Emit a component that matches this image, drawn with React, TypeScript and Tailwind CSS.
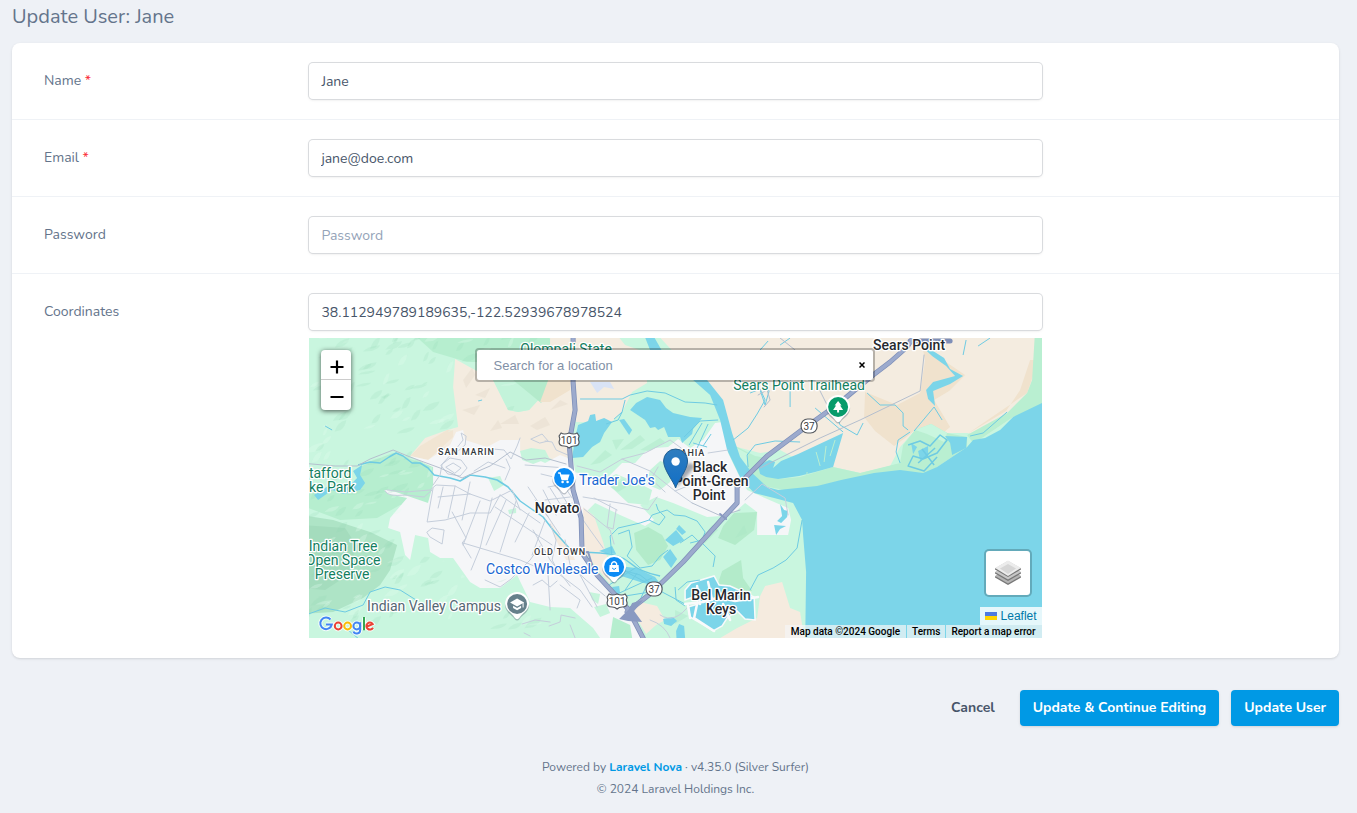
import React, { useState } from "react";

const halo = { paintOrder: "stroke" as const, strokeLinejoin: "round" as const };

const inputClass =
  "block h-9 w-full rounded bg-white px-3 text-sm text-[#475569] placeholder-[#94a3b8] shadow-sm ring-1 ring-[#d9dbde] outline-none focus:ring-2 focus:ring-sky-400";

/* Deterministic hillside facets scattered across the western ridges. */
function hillFacets() {
  let seed = 41;
  const next = () => {
    seed = (seed * 16807) % 2147483647;
    return seed / 2147483647;
  };
  return Array.from({ length: 300 }, (_, i) => {
    const x = 305 + next() * 260;
    const y = 335 + next() * 300;
    const w = 5 + next() * 13;
    const h = 3 + next() * 9;
    return (
      <path
        key={i}
        d={`M${x} ${y} q${w * 0.3} ${-h * 0.9} ${w} ${-h} q${-w * 0.1} ${h * 0.6} ${-w * 0.5} ${h * 0.9} z`}
        fill={i % 3 === 0 ? "#e2fcee" : "#8fd5b0"}
        opacity={i % 3 === 0 ? 0.3 : 0.17}
      />
    );
  });
}

function PoiPin({ x, y, color, children }: { x: number; y: number; color: string; children: React.ReactNode }) {
  return (
    <g transform={`translate(${x} ${y})`}>
      <path d="M-12 1 A12 12 0 1 1 12 1 C11 8 5 10 2.5 14 Q0 17 -2.5 14 C-5 10 -11 8 -12 1Z" fill="#475569" opacity=".35" transform="translate(0 1)" />
      <path d="M-12 0 A12 12 0 1 1 12 0 C11 7 5 9 2.5 13.5 Q0 17 -2.5 13.5 C-5 9 -11 7 -12 0Z" fill="#fff" />
      <circle r="10" fill={color} />
      {children}
    </g>
  );
}

function Shield37({ x, y }: { x: number; y: number }) {
  return (
    <g transform={`translate(${x} ${y})`}>
      <rect x="-8" y="-7" width="16" height="14" rx="6.5" fill="#fff" stroke="#54595f" strokeWidth="1.2" />
      <text y="3.6" textAnchor="middle" fontSize="10" fill="#3c4043">37</text>
    </g>
  );
}

function Shield101({ x, y }: { x: number; y: number }) {
  return (
    <g transform={`translate(${x} ${y})`}>
      <path d="M-8 -7 Q-5 -5 0 -7 Q5 -5 8 -7 L10 -4 Q8.500 -1 10 2 Q10 6 5 6 Q2 6 0 8 Q-2 6 -5 6 Q-10 6 -10 2 Q-8.500 -1 -10 -4Z" fill="#fff" stroke="#54595f" strokeWidth="1.2" />
      <text y="4" textAnchor="middle" fontSize="10" fill="#3c4043">101</text>
    </g>
  );
}

function Terrain() {
  return (
    <g>
      <rect x="300" y="330" width="750" height="320" fill="#c9f6df" />
      {/* wooded ridges */}
      <g fill="#b6eecf">
        <path d="M409 330H550V362L467 362 433 352Z" />
        <path d="M300 515L333 520 370 532 397 545 390 570 380 585 363 598 333 612 300 614Z" fill="#aee4c6" />
        <path d="M360 467L372 461 393 453 433 467 433 485 427 505 400 505 377 518 340 520 300 505V490L360 490Z" />
        <path d="M300 525L345 528 356 545 348 575 325 590 300 588Z" fill="#a4dcbd" />
      </g>
      {/* dry grassland */}
      <g fill="#f4ece0">
        <path d="M455 359L493 380 508 410 518 412 529 410 540 398 550 386V330H573V430L566 465 530 450 433 467 410 456 425 438 447 430 458 427 453 387Z" />
        <path d="M573 330H613L625 345 645 352 647 383 632 392 622 412 610 423 576 422Z" />
        <path d="M653 330H1050V398L1013 417 985 436 967 433 947 433 933 422 915 430 900 447 890 466 860 473 833 467 817 470 780 450 760 453 733 446 720 400 690 370Z" />
      </g>
      <path d="M493 380L508 410 518 412 529 410 540 398 550 384V360H480Z" fill="#c3f3da" />
      <path d="M513 380L541 403 550 386V370Z" fill="#b3eacb" />
      <g fill="#f0e2cd">
        <path d="M550 375H571L570 390 550 402 540 402Z" />
        <path d="M410 456L420 446 447 430 453 430 453 437 441 448 428 460Z" opacity=".7" />
        <path d="M923 350L943 360 965 375 949 391 934 400 950 427 944 432 931 424 915 430 905 438 894 446 875 431 864 417 865 392 897 405 920 393 925 360Z" />
        <path d="M1027 393L1033 376 1035 360 1030 360 1020 390 1006 411 967 434Z" />
      </g>
      {/* built-up areas */}
      <g fill="#f5f6f8">
        <path d="M410 456L433 467 433 485 428 503 390 490 384 490 388 494 407 498 390 518 388 528 400 532 405 555 410 560 415 535 428 538 430 552 440 558 453 558 470 582 480 588 500 588 517 575 530 602 550 607 570 608 593 628 600 638V650H648L628 606 596 571 582 550 583 512 573 460 560 455 545 463 520 452 520 440 500 440 487 447 465 440 463 430 456 432 450 445 428 460Z" />
        <path d="M574 472L588 475 603 482 622 463 635 463 645 452 655 448 668 447 678 439 690 448 703 440 715 423 722 422 728 453 740 478 747 490 774 502 788 508 791 520 788 535 757 535 757 512 745 503 735 512 721 516 707 517 690 510 673 503 656 497 640 505 654 520 645 526 620 515 595 503 583 515 577 490Z" />
      </g>
      <g fill="#c6f4dc">
        <path d="M520 451L531 448 545 450 549 458 533 464 522 460Z" />
        <path d="M604 480L616 474 628 479 636 482 652 490 648 505 628 503 612 488Z" />
        <path d="M488 478L500 476 504 485 494 491Z" />
        <path d="M508 510L516 508 516 513 509 514Z" />
        <path d="M650 470L660 461 673 465 670 482 660 490 646 484Z" />
        <path d="M589 592L600 594 598 604 592 600Z" />
        <path d="M594 607L606 604 610 613 600 617Z" />
        <path d="M613 617L630 625 634 650H608Z" fill="#b6eecf" />
      </g>
      <g fill="#f5ebdf">
        <path d="M583 507L594 516 603 542 607 557 610 584 600 572 583 550Z" />
        <path d="M630 606L640 602 657 606 665 620 656 625 646 634 640 624Z" />
        <path d="M700 650L737 628 757 618 760 596 765 586 782 582 790 608 800 612 806 650Z" />
        <path d="M550 520L555 530 570 550 575 560 566 560 556 540Z" />
      </g>
      {/* marsh and open space */}
      <path d="M733 445L755 456 767 458 765 472 778 479 800 477 833 467 860 473 900 463 903 445 915 430 931 424 947 433 967 437 967 447 937 467 923 476 900 473 841 484 790 491 753 484Z" fill="#b9efd1" />
      <path d="M733 446L748 454 747 470 740 474Z" fill="#c9f6df" />
      <path d="M967 435L1007 413 1027 393 1032 380 1035 330H1050V405L1013 417 985 436 973 443Z" fill="#b9efd1" />
      <path d="M915 430L931 424 947 433 944 442 927 434Z" fill="#c9f6df" />
      <g fill="#b3ebca">
        <path d="M634 533L648 527 662 535 668 546 660 560 648 565 636 550Z" />
        <path d="M723 526L734 513 757 512 754 530 735 545 718 538Z" />
        <path d="M722 571L741 560 743 578 752 591 728 590 718 583Z" />
      </g>
      <path d="M590 382H610L614 389 604 387 597 393Z" fill="#d9e3f5" />
    </g>
  );
}

function Water() {
  return (
    <g fill="#7cd5e9">
      {/* bay */}
      <path d="M740 463L752 475 767 487 778 490 817 486 841 480 874 473 900 470 923 473 937 467 967 447 973 440 985 438 1000 430 1013 417 1050 399V650H805L806 572 803 535 802 520 793 503 774 498 754 493 742 480Z" />
      {/* river */}
      <path d="M642 330H650L662 351 687 367 707 380 723 400 732 433 740 457 752 473 767 487 758 492 748 487 740 477 727 450 720 420 710 395 693 380 670 364 650 350Z" />
      <path d="M630 410L636 403 647 397 660 400 666 408 673 413 690 417 702 418 693 429 692 434 682 443 680 437 668 437 664 427 658 430 655 427 650 428 645 420 636 414Z" />
      <path d="M578 425L588 421 590 415 595 414 596 421 604 418 612 422 604 433 600 442 592 447 583 457 572 458 575 438Z" />
      <path d="M619 420L624 419 632 430 629 435 625 429Z" />
      <path d="M760 474L758 466 769 460 775 462 773 468 781 461 798 454 843 433 833 467 815 472 799 476 778 479 766 477Z" />
      <path d="M362 465L360 475 365 483 360 490 344 494 332 490 318 500 314 495 328 486 348 487 357 478 353 471Z" />
      <path d="M665 540L676 530 684 540 673 546Z M676 529L679 525 686 532 682 535Z M663 557L670 549 677 559 671 568Z" />
      <path d="M945 436L967 437 966 448 952 455 950 443Z M918 451L928 446 928 456 920 460Z M911 443L917 447 913 454Z" />
      <path d="M780 504L784 510 788 511 787 517 781 523 777 521 782 516Z" />
      <path d="M774 525L786 526 780 529 776 535Z" />
      <path d="M685 600V590L691 583 714 576 719 585 730 586 754 597 755 620 745 619 737 611 727 618 722 626 713 631 702 624 690 617 688 607 698 604 696 596Z" stroke="#f8fafb" strokeWidth="1.500" />
      <path d="M663 619L673 617 677 621 671 626 664 624Z M676 631L679 624 684 626 686 650H677Z M618 566L636 568 655 577 663 588 640 582 618 575Z M599 551L612 546 616 554 605 553Z M612 587L619 586 620 593 614 594Z" />
      <path d="M917 342L933 351 944 358 950 369 963 376 950 384 933 391 935 406 928 399 926 390 933 382 955 376 946 366 932 356Z" />
    </g>
  );
}

function Streams() {
  return (
    <g fill="none" stroke="#6ecbe3" strokeWidth="1" strokeLinejoin="round">
      <path strokeWidth="1.500" d="M358 465L370 462 380 463 389 457 396 453 403 456 412 463 420 463 428 468 434 475 450 478 460 481 470 475 485 477 497 480 508 487 520 501 530 508 543 517 553 530 570 549 582 552 600 553" />
      <path d="M600 553Q620 554 630 563T660 576" strokeWidth="1.500" />
      <path d="M300 617L325 608 345 612 363 605 370 592 385 587 400 590 416 600M348 630L360 640M325 426L332 430M478 401L482 400" />
      <path d="M580 399H622L630 395 647 391 665 393 685 402 705 403 717 405M622 412L618 420 606 424M684 437L700 421 718 420M689 445L702 423M697 448L708 424M703 446L711 434M693 443L707 447M625 400L622 412 614 419" />
      <path d="M612 559L610 536 618 528 640 523 649 520 659 525 665 517 658 510 656 504M618 534L629 530 632 547 627 556 640 568 652 566 660 556 668 550M649 520L652 515 667 510 674 515 685 516 697 521 705 532 702 540 690 543M680 543L692 535 698 541" />
      <path d="M611 567L640 575 662 592 685 604M609 585L635 568M615 595L652 578M625 590L637 573M640 600L648 582M619 568L645 582M625 596L650 592" />
      <path d="M700 541L715 556 713 567M802 520L797 548 786 560 773 568 758 575 750 590M678 590L687 582 700 580M675 587L676 600 685 606" />
      <path d="M733 440L748 428 757 414 765 400 760 389 750 393M758 384L765 405 769 391 764 384M748 467L747 455 755 445 775 441 800 442M790 390V407M803 380L811 368 814 351M760 350L768 341M780 345L790 338" />
      <path d="M867 393L880 405 895 405 903 413 903 426 908 430M914 431L934 407 942 420M835 413L840 425 857 435 863 423M815 408L843 432M900 463L896 452 898 440 910 432M970 436L983 433 1007 412M963 355L966 340M978 346L990 338" />
      <path d="M807 472L806 484M816 452L820 466M826 446L824 462M835 440L830 456" stroke="#b9efd1" />
      <path strokeWidth="1.500" d="M908 445L920 441 930 446 940 435 947 440 937 453 923 459 913 456 908 466 924 471 937 457M918 463L935 448M922 449L934 465" />
    </g>
  );
}

function Roads() {
  return (
    <g fill="none" strokeLinejoin="round" strokeLinecap="round">
      <g stroke="#c5cedb" strokeWidth="1">
        <path d="M441 465L450 458 461 460 467 468 460 476 448 474ZM446 467L453 463 461 468 455 473Z" />
        <path d="M433 485L440 475 442 464 455 450 463 440 461 433 466 436 465 445 458 451M493 449L504 450 511 459 517 446 520 438M505 480L510 468 506 459M474 471L488 462 505 468" />
        <path d="M387 490L405 492 430 490 436 485 455 486 470 494 490 501 512 490 520 510M385 491Q387 497 405 495L424 497 432 490M433 488L427 522 445 520 470 513 490 513 500 495M438 497L470 494M443 487L438 508M455 486L448 518M470 482L462 520M452 512L466 538 462 543 471 558M480 501L463 545M492 498L480 548 471 570M500 495L540 523M495 507L552 545M506 500L486 545M516 501L500 552M529 513L515 542M545 520L532 555M463 543L520 560 548 572" />
        <path d="M427 532L432 528 444 530 442 544 430 537ZM485 580L500 587 511 579 530 560 540 546M533 530L550 560 570 586M550 524L556 540 552 560 560 575 580 590 592 607M565 540L570 565 586 580 605 596M580 575L597 607M560 585L580 600 577 608M548 575L550 610M533 585L542 580 550 587 557 581" />
        <path d="M545 500L570 497M542 507L572 503M535 500L548 517M543 490L556 515M550 488L565 512M557 487L572 511M564 486L572 498M548 487L570 483M528 487L548 517 560 535M541 474L566 480M525 465L566 468" />
        <path d="M545 441L552 442 556 450 570 456M531 439L542 434 548 441 540 443ZM577 466L600 472 622 459 645 453 670 440 681 448M622 459L650 471 675 491 692 503M583 497L625 504 648 510 657 497M610 504L607 527 613 529 616 510M594 498L617 510M675 491L690 485 702 476M658 467L651 479 665 492M708 453L728 450M745 500L762 484 785 498 788 515" />
        <path d="M583 520L590 530 603 548M584 509L610 530 614 544M549 626L560 622 561 615 575 618M570 625L575 638M522 624L535 620 550 622M524 633L530 636M650 620Q665 625 670 638M660 615Q675 625 690 604" />
      </g>
      <path stroke="#b5bfce" d="M300 463L335 466 357 466 370 459 393 450 410 457 440 468 462 478 490 466 510 452 526 460 545 458 566 464M760 468L820 438 860 420 920 391 924 355M820 391L829 409M780 338L795 350M758 395L767 390 770 400 764 407M692 503L721 516 740 510" />
      <g stroke="#f9fafb" strokeWidth="2.500">
        <path d="M685 604L703 602 720 597 735 601 758 597M688 606L690 618M697 604L694 618 714 631M723 604L730 620M697 586L700 604M708 582L712 600" />
      </g>
      <g stroke="#7e8fb8" strokeWidth="5">
        <path d="M573 330V382L575 410 569 443 573 490 581 518 582 553 597 575 628 609 643 638 648 650" />
        <path d="M627 612L650 594 683 562 723 518 737 503V487L747 476 767 456 803 429 838 404 873 375 890 362 907 347 918 330" />
        <path d="M910 341H950" />
      </g>
      <g stroke="#9caacd" strokeWidth="3.500">
        <path d="M573 330V382L575 410 569 443 573 490 581 518 582 553 597 575 628 609 643 638 648 650" />
        <path d="M627 612L650 594 683 562 723 518 737 503V487L747 476 767 456 803 429 838 404 873 375 890 362 907 347 918 330" />
      </g>
      <path d="M619 619L629 609 632 603 643 600 634 611 642 622 628 621Z" fill="#8999c1" />
      <path d="M580 553L588 552 592 565 588 568M720 514L726 519" stroke="#8999c1" strokeWidth="2" />
    </g>
  );
}

function MapLabels() {
  return (
    <g stroke="#fff" strokeWidth="2.500" style={halo}>
      <g fill="#13805f" fontSize="14" textAnchor="middle">
        <text x="566" y="354">Olompali State</text>
        <text x="799" y="390">Sears Point Trailhead</text>
        <text x="330" y="478">tafford</text>
        <text x="332" y="492">ke Park</text>
        <text x="343" y="551">Indian Tree</text>
        <text x="343" y="565">Open Space</text>
        <text x="342" y="579">Preserve</text>
      </g>
      <g fill="#1967d2" fontSize="14">
        <text x="579" y="485">Trader Joe's</text>
        <text x="486" y="574">Costco Wholesale</text>
      </g>
      <text x="367" y="611" fontSize="14" fill="#546773">Indian Valley Campus</text>
      <g fill="#26292e" fontSize="14" fontWeight="500" textAnchor="middle">
        <text x="909" y="350">Sears Point</text>
        <text x="557" y="513">Novato</text>
        <text x="710" y="472">Black</text>
        <text x="711" y="486">Point-Green</text>
        <text x="709" y="500">Point</text>
        <text x="721" y="600">Bel Marin</text>
        <text x="721" y="614">Keys</text>
      </g>
      <g fill="#33373c" fontSize="9" fontWeight="500" className="tracking-widest">
        <text x="438" y="455">SAN MARIN</text>
        <text x="534" y="555">OLD TOWN</text>
        <text x="674" y="456">BAHIA</text>
      </g>
    </g>
  );
}

function MapCanvas() {
  return (
    <svg
      viewBox="308.5 338 733 300"
      preserveAspectRatio="xMidYMid slice"
      className="block h-full w-full font-[Roboto,sans-serif]"
      role="img"
      aria-label="Map of Novato"
    >
      <defs>
        <clipPath id="hills">
          <path d="M300 330H550L548 386 528 410 508 410 493 380 455 359 453 387 458 427 410 456 433 467 427 505 390 518 405 555 440 558 480 588 517 575 530 602 570 608 600 650H300Z" />
        </clipPath>
        <linearGradient id="pin" x1="0" y1="0" x2="0" y2="1">
          <stop offset="0" stopColor="#2e7dbf" />
          <stop offset="1" stopColor="#126fc6" />
        </linearGradient>
        <filter id="soft"><feGaussianBlur stdDeviation="1.500" /></filter>
      </defs>
      <Terrain />
      <g clipPath="url(#hills)">{hillFacets()}</g>
      <g fill="#a9e6c5" opacity=".4">
        <path d="M590 465L605 450 612 455 600 463Z M620 450L640 435 645 440 632 449Z M640 450L660 438 665 442 650 451Z M612 440L624 439 616 450Z" />
        <path d="M610 487L624 479 630 485 618 492Z M700 540L712 525 718 530 705 543Z M675 610L688 616 675 624Z M735 538L744 525 747 533Z" />
      </g>
      <g fill="#e8dfd1" opacity=".6">
        <path d="M463 380L472 368 475 375 466 388Z M475 395L490 388 485 398Z M462 410L480 405 474 415Z M500 424L515 415 519 424Z M530 426L545 417 550 425 537 430Z M550 410L560 400 568 404Z M490 431L498 420 502 428Z" />
      </g>
      <Water />
      <Streams />
      <Roads />
      <MapLabels />
      <Shield101 x={569} y={440} />
      <Shield101 x={617} y={601} />
      <Shield37 x={809} y={426} />
      <Shield37 x={654} y={589} />

      <PoiPin x={564} y={478} color="#0c8cf5">
        <path d="M-6 -5H-4L-2 1.500H4" fill="none" stroke="#fff" strokeWidth="1.300" />
        <path d="M-4 -3.500H5.500L4 1H-2.500Z" fill="#fff" />
        <circle cx="-1.500" cy="4" r="1.300" fill="#fff" /><circle cx="3.500" cy="4" r="1.300" fill="#fff" />
      </PoiPin>
      <PoiPin x={614} y={567} color="#0c8cf5">
        <path d="M-4.500 -2H4.500L5 5H-5Z" fill="#fff" />
        <path d="M-2.500 -2V-3.500Q0 -7 2.500 -3.500V-2" fill="none" stroke="#fff" strokeWidth="1.300" />
        <path d="M-2 1Q0 4 2 1" fill="none" stroke="#0c8cf5" />
      </PoiPin>
      <PoiPin x={838} y={407} color="#079b6b">
        <path d="M0 -6L3.500 -1.500H2L5 3H1V5.500H-1V3H-5L-2 -1.500H-3.500Z" fill="#fff" />
      </PoiPin>
      <PoiPin x={517} y={604} color="#66808b">
        <path d="M-7 -1.500L0 -5.500 7 -1.500 0 2.500Z M-4 1.800L0 4 4 1.800V4L0 6.200-4 4Z" fill="#fff" />
        <path d="M6 -1.500V3.500" stroke="#fff" />
      </PoiPin>

      <path d="M676 488L691 471Q698 466 690 463L680 467Z" fill="#111827" opacity=".35" filter="url(#soft)" />
      <path d="M675.500 488C674 482 663.500 470 663.500 461A12 12 0 0 1 687.500 461C687.500 470 677 482 675.500 488Z" fill="url(#pin)" stroke="#225f91" strokeWidth="1" />
      <circle cx="675.500" cy="461.500" r="4.200" fill="#fff" />
    </svg>
  );
}

function GoogleMark() {
  return (
    <a href="#google" aria-label="Google" className="absolute bottom-0 left-[9px]">
      <svg width="60" height="26" viewBox="0 0 60 26" fill="none">
        <g stroke="#fff" strokeWidth="4" opacity=".8">
          <path d="M12.500 7.500A5.800 5.800 0 1 0 13.800 12.500H8" />
          <circle cx="20.200" cy="14" r="3.400" /><circle cx="29.600" cy="14" r="3.400" /><circle cx="38.800" cy="14" r="3.400" />
          <path d="M42.200 10.500V18C42.200 22.500 36.500 22.500 35.500 19.500M46 5.500V18M55 15.700A3.500 3.500 0 1 1 54.700 12L49 14.700" />
        </g>
        <g strokeWidth="2">
          <path stroke="#4285f4" d="M12.500 7.500A5.800 5.800 0 1 0 13.800 12.500H8" />
          <circle stroke="#ea4335" cx="20.200" cy="14" r="3.400" />
          <circle stroke="#fbbc04" cx="29.600" cy="14" r="3.400" />
          <circle stroke="#4285f4" cx="38.800" cy="14" r="3.400" />
          <path stroke="#4285f4" d="M42.200 10.200V18C42.200 22.500 36.500 22.500 35.500 19.500" />
          <path stroke="#34a853" d="M46 5V18.200" />
          <path stroke="#ea4335" d="M55 15.700A3.500 3.500 0 1 1 54.700 12L49 14.700" />
        </g>
      </svg>
    </a>
  );
}

function LocationMap() {
  const [query, setQuery] = useState("");
  return (
    <div className="relative mt-2 h-[300px] overflow-hidden">
      <MapCanvas />
      <div className="absolute left-3 top-3 flex w-[30px] flex-col overflow-hidden rounded-sm bg-white text-black shadow-[0_1px_5px_rgba(0,0,0,.65)]">
        <button type="button" aria-label="Zoom in" className="flex h-[30px] items-center justify-center border-b border-[#ccc]">
          <svg width="14" height="14" viewBox="0 0 14 14" className="ml-px mt-1" stroke="currentColor" strokeWidth="2.200"><path d="M.5 7H13.500M7 .5V13.500" /></svg>
        </button>
        <button type="button" aria-label="Zoom out" className="flex h-[30px] items-center justify-center">
          <svg width="14" height="14" viewBox="0 0 14 14" className="ml-px mt-1" stroke="currentColor" strokeWidth="2.200"><path d="M.5 7H13.500" /></svg>
        </button>
      </div>
      <div className="absolute inset-x-0 top-[10px] mx-auto flex h-[34px] w-[400px] max-w-[70%] items-center rounded border-2 border-black/25 bg-white bg-clip-padding font-['Liberation_Sans',sans-serif]">
        <input
          aria-label="Search for a location"
          placeholder="Search for a location"
          value={query}
          onChange={(e) => setQuery(e.target.value)}
          className="h-full min-w-0 flex-1 bg-transparent pl-4 text-[13px] text-slate-700 placeholder-[#8290a6] outline-none"
        />
        <button type="button" aria-label="Clear search" onClick={() => setQuery("")} className="flex h-full w-[22px] items-center justify-center text-black">
          <svg width="6" height="6" viewBox="0 0 6 6" stroke="currentColor" strokeWidth="1.500"><path d="M.5.5L5.500 5.500M5.500.5L.5 5.500" /></svg>
        </button>
      </div>
      <button type="button" aria-label="Layers" className="absolute bottom-[41px] right-[10px] flex size-12 items-center justify-center rounded-[5px] border-2 border-black/20 bg-white bg-clip-padding">
        <svg width="28" height="28" viewBox="0 0 28 28">
          <path d="M1 17.500L14 10 27 17.500V18.500L14 26 1 18.500Z" fill="#777" />
          <path d="M1 17L14 9.500 27 17 14 24.500Z" fill="#b4b4b4" />
          <path d="M1 13.500L14 6 27 13.500V14.500L14 22 1 14.500Z" fill="#777" />
          <path d="M1 13L14 5.500 27 13 14 20.500Z" fill="#c7c7c7" />
          <path d="M1 9.500L14 2 27 9.500V10.500L14 18 1 10.500Z" fill="#777" />
          <path d="M1 9L14 1.500 27 9 14 17Z" fill="#ececec" />
          <path d="M6 9.500L14 5 22 9.500 14 15Z" fill="#d6d6d6" />
        </svg>
      </button>
      <GoogleMark />
      <div className="absolute bottom-0 right-0 flex flex-col items-end">
        <a href="#leaflet" className="flex h-[18px] items-center gap-1 bg-white/80 px-[5px] font-['Liberation_Sans',sans-serif] text-xs text-[#0078a8]">
          <svg width="12" height="8" viewBox="0 0 12 8"><path fill="#4c7be1" d="M0 0h12v4H0z" /><path fill="#ffd500" d="M0 4h12v4H0z" /></svg>
          Leaflet
        </a>
        <div className="flex h-[13px] gap-px font-[Roboto,sans-serif] text-[10px] font-medium leading-[13px] text-black">
          <span className="bg-[#f5f5f5]/70 px-[6px]">Map data ©2024 Google</span>
          <a href="#terms" className="bg-[#f5f5f5]/70 px-[5px]">Terms</a>
          <a href="#report" className="bg-[#f5f5f5]/70 pl-[5px] pr-[6px]">Report a map error</a>
        </div>
      </div>
    </div>
  );
}

function Field({ id, label, required, children }: { id: string; label: string; required?: boolean; children: React.ReactNode }) {
  return (
    <div className="flex py-5">
      <div className="w-1/5 px-8 pt-2">
        <label htmlFor={id} className="block text-sm text-[#64748b]">
          {label}
          {required && <span className="text-red-500"> *</span>}
        </label>
      </div>
      <div className="w-3/5 px-8">{children}</div>
    </div>
  );
}

export default function App() {
  const [values, setValues] = useState({
    name: "Jane",
    email: "jane@doe.com",
    password: "",
    coordinates: "38.112949789189635,-122.52939678978524",
  });
  const bind = (key: keyof typeof values) => ({
    id: key,
    value: values[key],
    onChange: (e: React.ChangeEvent<HTMLInputElement>) => setValues({ ...values, [key]: e.target.value }),
    className: inputClass,
  });

  return (
    <div className="min-h-screen bg-[#eef1f6] pl-3 pr-[18px] font-[Nunito,'Open_Sans',sans-serif]">
      <form onSubmit={(e) => e.preventDefault()}>
        <h1 className="pb-3 pt-[3px] text-xl leading-7 text-[#64748b]">Update User: Jane</h1>
        <div className="divide-y divide-[#eff2f6] rounded-lg bg-white shadow-sm">
          <Field id="name" label="Name" required><input type="text" {...bind("name")} /></Field>
          <Field id="email" label="Email" required><input type="email" {...bind("email")} /></Field>
          <Field id="password" label="Password"><input type="password" placeholder="Password" {...bind("password")} /></Field>
          <Field id="coordinates" label="Coordinates">
            <input type="text" {...bind("coordinates")} />
            <LocationMap />
          </Field>
        </div>
        <div className="mt-8 flex justify-end gap-3 text-sm font-bold">
          <button type="button" className="h-9 px-[13px] text-[#475569]">Cancel</button>
          <button type="submit" className="h-9 rounded bg-[#0099e5] px-[13px] text-white shadow-sm">Update &amp; Continue Editing</button>
          <button type="submit" className="h-9 rounded bg-[#0099e5] px-[13px] text-white shadow-sm">Update User</button>
        </div>
      </form>
      <footer className="mt-[30px] text-center text-xs leading-[22px] text-[#64748b]">
        <p>Powered by <a href="#nova" className="font-bold text-[#0099e5]">Laravel Nova</a> · v4.35.0 (Silver Surfer)</p>
        <p>© 2024 Laravel Holdings Inc.</p>
      </footer>
    </div>
  );
}
